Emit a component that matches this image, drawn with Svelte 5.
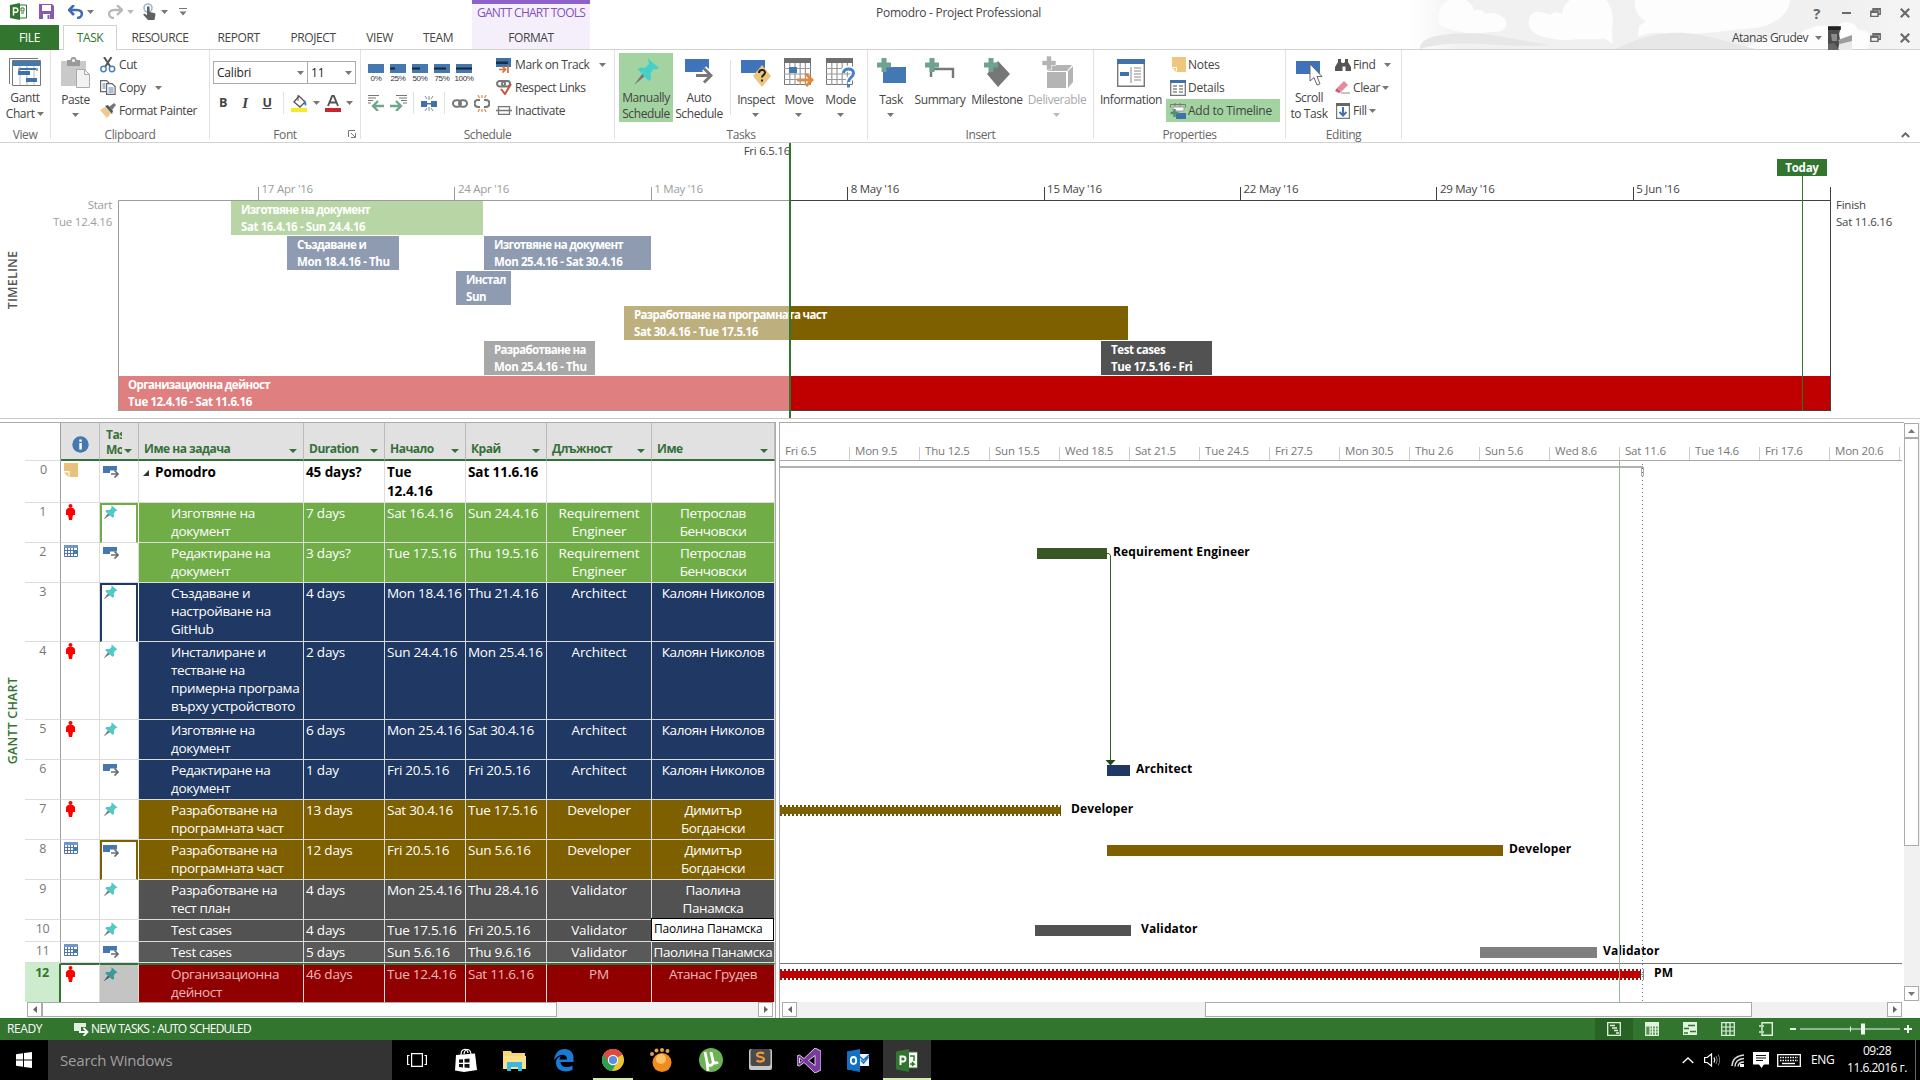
<script>
  const arrowDown = '<path d="M0 0h7L3.5 4z" fill="#777"/>';
  const bar = (w) => `<rect width="16" height="9" y="7" fill="#4478ae"/><rect x="0" y="10.5" width="${w}" height="2" fill="#17263a"/>`;
  const calendar = '<path d="M.5 .5h26v26H.5z" fill="#fff" stroke="#777"/><path d="M0 0h27v5H0z" fill="#6f6f6f"/><path d="M5.8 5v22M11 5v22M16.2 5v22M21.4 5v22M0 10.5h27M0 16h27M0 21.500h27" stroke="#9a9a9a" stroke-width="1.200"/>';
  const plus = '<path d="M4.500 0h5v4.500H14v5H9.500V14h-5V9.500H0v-5h4.500z" fill="#6fa292"/>';
  const restore = '<path d="M3 3V.8h7.200v5.400H8M.8 3.200H8v5.200H.8zM.8 4.200H8M3 1.500h7" fill="none" stroke="#6a6a6a" stroke-width="1.500"/>';
  const pinHead = 'M8.500 .3l6 5.200-2 .7-1.700 2.300.3 3.200-1.600 1L2.200 6.300l1.200-1.400 3.300.1 1.800-1.900z';

  // name: [width, height, markup]
  const icons = {
    down: [7, 4, arrowDown],
    downLight: [7, 4, '<path d="M0 0h7L3.500 4z" fill="#bbb"/>'],
    project: [17, 17, '<path d="M9 2h7.500v13H9z" fill="#fff" stroke="#31752f"/><path d="M11 5h3v3h-3zM11 10h3" stroke="#31752f" fill="none"/><path d="M0 2l10-2v17L0 15z" fill="#31752f"/><path d="M3.500 12.500V5h2.200a2 2 0 010 4.300H3.500" fill="none" stroke="#fff" stroke-width="1.500"/>'],
    save: [15, 15, '<path d="M0 0h13l2 2v13H0z" fill="#8558b4"/><path d="M3 1h9v6H3z" fill="#fff"/><path d="M4 10h7v5H4z" fill="#fff"/><path d="M8.500 11h2v4h-2z" fill="#8558b4"/>'],
    undo: [16, 14, '<path d="M6 0L1 5l5 5M2 5h7c7 0 6 8 0 8" fill="none" stroke="#3d6dae" stroke-width="2.600"/>'],
    redo: [16, 14, '<path d="M10 0l5 5-5 5M14 5H7C0 5 1 13 7 13" fill="none" stroke="#b8b8b8" stroke-width="2.400"/>'],
    touch: [14, 17, '<circle cx="6" cy="5" r="4" fill="none" stroke="#9bb6d6" stroke-width="1.600"/><path d="M5 4.500a1.300 1.300 0 012.600 0V9l4.500 1c1.300.3 1.500 1 1.300 2l-.9 5H6l-4.500-5c-.7-1 .7-1.800 1.600-1L5 12.300z" fill="#606060"/>'],
    customise: [8, 8, '<path d="M0 .5h8" stroke="#777"/><path d="M.5 3.500h7L4 7.500z" fill="#777"/>'],
    gantt: [32, 28, '<path d="M.5 26V.5H29" fill="none" stroke="#777"/><path d="M3.500 2.500h28v25h-28z" fill="#fff" stroke="#777"/><path d="M4 3h27v5H4z" fill="#4579ad"/><path d="M11 8v19M18 8v19M25 8v19" stroke="#bbb"/><path d="M11 10h16v2H11zM9 13h12v4H9zM17 20h11v4H17z" fill="#3f72ab"/><path d="M10 10v3M28 10v3" stroke="#444"/>'],
    paste: [29, 31, '<path d="M0 4h25v25H0z" fill="#c9c9c9"/><path d="M6 3h3.500a3 3 0 016 0H19v6H6z" fill="#9a9a9a"/><circle cx="12.500" cy="3.500" r="1.500" fill="#fff"/><path d="M15.500 12.500h8l5 5v13h-13z" fill="#f3f1f4" stroke="#aaa"/><path d="M23.500 12.500v5h5" fill="none" stroke="#aaa"/>'],
    cut: [16, 16, '<path d="M4 0l6.500 10M11.500 0L5 10" stroke="#555" stroke-width="2"/><circle cx="3.500" cy="12" r="2.700" fill="none" stroke="#4f80b7" stroke-width="1.500"/><circle cx="12" cy="12" r="2.700" fill="none" stroke="#4f80b7" stroke-width="1.500"/>'],
    copy: [16, 15, '<path d="M.6.6h6l2.500 2.500v8.500H.6z" fill="#fff" stroke="#666" stroke-width="1.200"/><path d="M2.500 4h3M2.500 6h3M2.500 8h3" stroke="#4f80b7"/><path d="M6.600 3.600h5.500l3 3v7.800H6.600z" fill="#fff" stroke="#666" stroke-width="1.200"/><path d="M8.500 8h5M8.500 10h5M8.500 12h5" stroke="#4f80b7"/>'],
    painter: [16, 15, '<path d="M0 7l5-3 6 6-4 5z" fill="#ecc98c"/><path d="M5 3l3-1 5 6-1 3z" fill="#555"/><path d="M9 4l5-4 2 2-4 5z" fill="#777"/>'],
    bucket: [17, 17, '<path d="M3 7l5-6 6 6-5 5z" fill="#fff" stroke="#555" stroke-width="1.300"/><path d="M7 0v6" stroke="#555"/><path d="M13 5c2 1 3 4 2 6l-2-2z" fill="#4579ad"/><path d="M0 13h16v4H0z" fill="#f4ea2a"/>'],
    fontColor: [16, 17, '<path d="M3 11L7.200.8h1.600L13 11M4.600 7.500h6.800" fill="none" stroke="#555" stroke-width="1.900"/><path d="M0 13h16v4H0z" fill="#c8262f"/>'],
    launcher: [8, 8, '<path d="M.5 7V.5H7M3 3l4 4M7.500 3v4.500H3" fill="none" stroke="#777"/>'],
    p0: [16, 16, bar(0)], p25: [16, 16, bar(5)], p50: [16, 16, bar(8)], p75: [16, 16, bar(12)], p100: [16, 16, bar(16)],
    outdent: [17, 16, '<path d="M0 .5h11M0 3h8M0 5.500h5M0 8h3" stroke="#777" stroke-width="1.200"/><path d="M16 11H6M10 6l-5 5 5 5" fill="none" stroke="#6fa58c" stroke-width="2.300"/>'],
    indent: [17, 16, '<path d="M6 .5h11M9 3h8M11 5.500h6M13 8h4" stroke="#777" stroke-width="1.200"/><path d="M0 11h10M6 6l5 5-5 5" fill="none" stroke="#6fa58c" stroke-width="2.300"/>'],
    split: [16, 15, '<path d="M0 5h6v6H0zM10 5h6v6h-6zM5 7h6v1.500H5z" fill="#3f72ab"/><path d="M8 0v4M8 11v4M4 0l2 3M12 0l-2 3M4 15l2-3M12 15l-2-3" stroke="#888"/>'],
    link: [16, 9, '<rect x="1" y="1.200" width="8" height="6.500" rx="3.200" fill="none" stroke="#777" stroke-width="2"/><rect x="7" y="1.200" width="8" height="6.500" rx="3.200" fill="none" stroke="#777" stroke-width="2"/>'],
    unlink: [16, 17, '<path d="M6 5H4a3.300 3.300 0 000 7h2M10 5h2a3.300 3.300 0 010 7h-2" fill="none" stroke="#777" stroke-width="2.200"/><path d="M8 0v3M4 0l1.500 3M12 0l-1.500 3M8 14v3M4 17l1.500-3M12 17l-1.500-3" stroke="#e08a45" stroke-width="1.200"/>'],
    track: [16, 16, '<path d="M0 1h15v9H0z" fill="#3f72ab"/><path d="M0 4.500h12v2.500H0z" fill="#1d2c40"/><path d="M3 12.500h6M6.500 9.500l3 3-3 3M12 8v8" fill="none" stroke="#d9702b" stroke-width="1.700"/>'],
    respect: [16, 15, '<rect x="1" y="1" width="8" height="5.500" rx="2.700" fill="none" stroke="#777" stroke-width="1.900"/><rect x="6" y="1" width="8" height="5.500" rx="2.700" fill="none" stroke="#777" stroke-width="1.900"/><path d="M5 9l4 5 6-10" fill="none" stroke="#c75336" stroke-width="2"/>'],
    inactive: [16, 9, '<path d="M2.500.7h11v7.600h-11zM0 4.500h16" fill="none" stroke="#777" stroke-width="1.300"/>'],
    pin: [27, 28, '<path d="M15 .5l11 9.500-2.500 1.500-3-.5-3 4.500.5 5.500-2.500 2L4.500 11l3-1.500 4.500.5 4-4z" fill="#45cfcb"/><path d="M9 16l2.500 2.500L1 27z" fill="#777"/>'],
    auto: [28, 26, '<path d="M0 0h24v13H0z" fill="#3f74ba"/><path d="M11 16h14M19 9.500l7 6.500-7 8" fill="none" stroke="#fff" stroke-width="6"/><path d="M11 16.500h14M19 9.500l7 7-7 7" fill="none" stroke="#777" stroke-width="3"/>'],
    inspect: [30, 28, '<path d="M0 1h24v13H0z" fill="#3f74ba"/><path d="M21 6l9 11-9 11-9-11z" fill="#ecc67c"/><path d="M18 14c0-4 6-4 6-.5 0 2.500-3 2.500-3 5M21 20.500v2" fill="none" stroke="#222" stroke-width="2"/>'],
    move: [30, 30, calendar + '<path d="M5 9h8v6H5z" fill="#4579ad"/><path d="M13 22h14M22 16l6 6-6 6" fill="none" stroke="#e28a3c" stroke-width="3"/>'],
    mode: [30, 30, calendar + '<path d="M17 15c0-6 11-6 11 0 0 5-5.500 4-5.500 9" fill="none" stroke="#fff" stroke-width="6"/><path d="M17.500 15c0-5.500 10-5.500 10 0 0 4.500-5 4.500-5 9M22.500 26v3.500" fill="none" stroke="#4a80c0" stroke-width="3"/>'],
    task: [29, 29, '<path d="M6 9h23v16H6z" fill="#4478b4"/>' + plus],
    summary: [30, 29, '<path d="M6 19v-8h22v9" fill="none" stroke="#777" stroke-width="2.400"/>' + plus],
    milestone: [26, 29, '<path d="M14 3l12 13-12 13L3 16z" fill="#777"/>' + plus],
    deliverable: [31, 33, '<path d="M5 15l6-6h19l-5 6zM5 16h19v16H5zM26 15l5-5v16l-5 6z" fill="#b4b4b4"/><path d="M4.500 0h5v4.500H14v5H9.500V14h-5V9.500H0v-5h4.500z" fill="#b4b4b4" stroke="#fff" stroke-width=".6"/>'],
    info: [28, 28, '<path d="M.7.7h26.600v26.600H.7z" fill="#fff" stroke="#777" stroke-width="1.400"/><path d="M0 0h28v5H0z" fill="#3f72ab"/><path d="M3 13h9v4H3z" fill="#3f72ab"/><path d="M14 8v16M17 9h7M17 12h7M17 15h7M17 18h7M17 21h7" stroke="#888"/>'],
    notes: [16, 15, '<path d="M2 0h14v15H6l-4-4z" fill="#efc77c"/><path d="M2 10h5v5z" fill="#fff"/><path d="M3 11h3v3z" fill="#efc77c"/>'],
    details: [16, 16, '<path d="M.7.7h14.600v14.600H.7z" fill="#fff" stroke="#777" stroke-width="1.300"/><path d="M0 0h16v3H0z" fill="#3f72ab"/><path d="M3 6h4M9 6h4M3 9h4M9 9h4M3 12h4M9 12h4" stroke="#888" stroke-width="1.500"/>'],
    timeline: [16, 16, '<path d="M.5 4.500V1.500h15v3M5 0v3M10 0v3" fill="none" stroke="#777"/><path d="M3 4h11v4H3z" fill="#fff" stroke="#999"/><path d="M6 10h10v6H6z" fill="#3f72ab"/><path d="M4.500 6v8M.5 10h8" stroke="#4e8d78" stroke-width="2.400"/>'],
    scroll: [27, 28, '<path d="M0 3h24v13H0z" fill="#3f72ba"/><path d="M14 6v17l4-3.500 3 7.500 3-1.200-3-7.300h5z" fill="#fff" stroke="#666"/>'],
    find: [16, 14, '<path d="M3 1h3v3l1 1h2l1-1V1h3v3l3 5v4h-5.500V8.500h-3V13H0V9l3-5z" fill="#555"/>'],
    clear: [16, 13, '<path d="M2 7l7-7 4 4-7 7z" fill="#e58a9b"/><path d="M2 7l4 4-2 1-4-2z" fill="#c55b70"/><path d="M6 12h9" stroke="#888"/>'],
    fill: [14, 16, '<path d="M.6.6h12.800v14.800H.6z" fill="#fff" stroke="#777" stroke-width="1.200"/><path d="M0 0h14v3H0z" fill="#666"/><path d="M7 4v8M3.500 9L7 12.500 10.500 9" fill="none" stroke="#3f72ab" stroke-width="2"/>'],
    min: [9, 2, '<path d="M0 0h9v2H0z" fill="#6a6a6a"/>'],
    restore: [11, 9, restore],
    close: [10, 10, '<path d="M.8.8l8.400 8.400M9.200.8L.8 9.200" stroke="#6a6a6a" stroke-width="2.200"/>'],
    collapse: [9, 6, '<path d="M.8 5L4.500 1.300 8.200 5" fill="none" stroke="#666" stroke-width="1.900"/>'],
    photo: [24, 24, '<path d="M0 0h24v24H0z" fill="#e9e9e9"/><path d="M0 0h13l-2 8 1 6-2 10H0z" fill="#4c4c4c"/><path d="M0 1h13v3H0z" fill="#222"/><path d="M3 8h6v7H4z" fill="#8b8b8b"/><path d="M13 0h11v9l-12 4z" fill="#fff"/><path d="M10 14l14-5v6l-12 3z" fill="#9d9d9d"/><path d="M0 18l6-1 5 7H0z" fill="#666"/>'],
    circleInfo: [17, 17, '<circle cx="8.500" cy="8.500" r="8.200" fill="#4478ae"/><path d="M7.300 7h2.500v6.500H7.300zM7.300 3.500h2.500v2.200H7.300z" fill="#fff"/>'],
    note: [15, 14, '<path d="M0 0h14v14H5.500V8H0z" fill="#e8c27d"/><path d="M0 9.500h4.500V14z" fill="#e8c27d"/>'],
    person: [9, 16, '<circle cx="4.500" cy="2" r="2" fill="#f00"/><path d="M2 4h5l2 2v5H7l-1 5H3l-1-5H0V6z" fill="#f00"/>'],
    cal: [14, 12, '<path d="M.5.5h13v11H.5z" fill="#fff" stroke="#5573a8"/><path d="M0 0h14v3H0z" fill="#6f96cf"/><path d="M3.500 3v8M6.500 3v8M9.500 3v8M1 5.500h12M1 8.500h12" stroke="#5573a8"/><path d="M10 6h3v2.500h-3z" fill="#1d8fc0"/>'],
    smallPin: [15, 15, `<path d="M5.200 8l2 2L.5 14.500z" fill="#777"/><path d="${pinHead}" fill="#4fcac6"/>`],
    darkPin: [15, 15, `<path d="M5.200 8l2 2L.5 14.500z" fill="#555"/><path d="${pinHead}" fill="#3a9a97"/>`],
    smallAuto: [16, 12, '<path d="M0 0h14v7H0z" fill="#4478ae"/><path d="M7 4.500h7v6H7z" fill="#fff"/><path d="M8 8h7M11.500 4.500L15 8l-3.500 3.500" fill="none" stroke="#6d6d6d" stroke-width="1.700"/>'],
    whiteAuto: [15, 13, '<path d="M0 0h12v4H7v4H0z" fill="#dff0df"/><path d="M5 9h8M9.500 5l4 4-4 4" fill="none" stroke="#fff" stroke-width="1.800"/>'],
    left: [4, 7, '<path d="M4 0v7L0 3.500z" fill="#666"/>'],
    right: [4, 7, '<path d="M0 0v7l4-3.500z" fill="#666"/>'],
    up: [7, 4, '<path d="M3.500 0L7 4H0z" fill="#777"/>'],
    caret: [8, 4, '<path d="M0 0h8L4 4z" fill="#35703a"/>'],
    expand: [6, 6, '<path d="M6 0v6H0z" fill="#333"/>'],
    vGantt: [14, 14, '<path d="M.7.7h12.600v12.600H.7zM3 3.500h5M5 6h5M7 8.500h4M9 11h3" fill="none" stroke="#dff3dd" stroke-width="1.300"/>'],
    vUsage: [14, 14, '<path d="M0 0h14v4H0zM.7 4v9.300h12.600V4M5 4v9M7.500 4v9M10.500 4v9M5 7h9M5 10h9" fill="#dff3dd" stroke="#dff3dd" stroke-width="1.200" fill-opacity=".2"/><path d="M0 0h14v4H0z" fill="#dff3dd"/>'],
    vTeam: [14, 14, '<path d="M0 0h14v13H0z" fill="#dff3dd"/><path d="M5 3.500h7M1 6.500h5M7 9.500h6M1 11h4" stroke="#31752f" stroke-width="1.700"/>'],
    vSheet: [14, 14, '<path d="M.7.7h12.600v12.600H.7zM5 1v12M9 1v12M1 5h12M1 9h12" fill="none" stroke="#dff3dd" stroke-width="1.200"/>'],
    vReport: [14, 14, '<path d="M3 3V.7h10.300v12.600H3V11M0 4h5M0 10h5M3 5v4" fill="none" stroke="#dff3dd" stroke-width="1.400"/>'],
    slider: [122, 14, '<path d="M0 6h6v2H0zM10 6.500h100v1H10zM60 4.500h1v5h-1zM71 1.500h4v11h-4zM114 6h8v2h-8zM117 3h2v8h-2z" fill="#eefaee"/>'],
    windows: [16, 16, '<path d="M0 2.200l7-1v6.300H0zM8 1l8-1v7.500H8zM0 8.500h7v6.300l-7-1zM8 8.500h8V16l-8-1z" fill="#fff"/>'],
    taskview: [20, 14, '<path d="M4.600.6h10.800v12.800H4.600zM2.500 2.500H.6v9h1.900M17.500 2.500h1.900v9h-1.900" fill="none" stroke="#fff" stroke-width="1.200"/>'],
    store: [22, 24, '<path d="M1 7l19-1.500L22 22l-13 2-9-1.500z" fill="#fff"/><path d="M6 7c0-7 6-7 7-2M9 6c1-6 6-6 7 0" fill="none" stroke="#fff" stroke-width="1.200"/><path d="M4 11.500l4-.3v3.500H4zM9.500 11l5-.4v4h-5zM4 16h4v3.500l-4-.4zM9.500 16h5v4l-5-.5z" fill="#111"/>'],
    folder: [23, 21, '<path d="M0 1h8l1 2h13v16H0z" fill="#f6d676"/><path d="M0 6h23v13H0z" fill="#fbe08b"/><path d="M4 21v-9h15v9h-4v-4H8v4z" fill="#3cb7e4"/>'],
    edge: [21, 23, '<path d="M1 11C2 3 7 0 11.500 0 18 0 21 5 20.500 10v3H7.500c.5 6 8 6 12 3.500v4.300C14 24 3 23 3 14c0-4 2-6 5-7-1 1-1.500 2.200-1.500 3.500H14C14 4 6 4.500 1 11z" fill="#1a7bd7"/>'],
    chrome: [22, 22, '<circle cx="11" cy="11" r="11" fill="#e9c536"/><path d="M11 11L1.500 5.500A11 11 0 0120.500 5.500z" fill="#dd4b3e"/><path d="M11 11L1.500 5.500A11 11 0 0010 22l5-9z" fill="#2f9e55"/><path d="M11 5.500h9.500a11 11 0 00-19 0L6 12z" fill="#dd4b3e"/><circle cx="11" cy="11" r="5.200" fill="#fff"/><circle cx="11" cy="11" r="4.100" fill="#5b8de0"/>'],
    gom: [23, 24, '<circle cx="12" cy="14.500" r="9.500" fill="#f08c1d"/><circle cx="11" cy="11" r="5" fill="#fbc267"/><circle cx="2" cy="6" r="2" fill="#d9a05a"/><circle cx="6.500" cy="2.500" r="2" fill="#e8a73c"/><circle cx="12" cy="2" r="2" fill="#e8a73c"/><circle cx="17.500" cy="3" r="2" fill="#d9a05a"/>'],
    torrent: [24, 24, '<circle cx="12" cy="12" r="12" fill="#6db253"/><path d="M6 4l2 10c1 5 7 4 6-1L12 4M14 13c1 3 4 2 5 1M8 14l1 9" fill="none" stroke="#fff" stroke-width="2.800"/>'],
    sublime: [23, 22, '<rect width="23" height="21" rx="2" fill="#c8c8c8"/><rect x="1.500" y="0" width="20" height="17" rx="2" fill="#4a4a4a"/><path d="M15 4.500c-3-1.500-7-1-7 1.500s7 1.500 7 4-4 3.500-7.500 1.500" fill="none" stroke="#f0993c" stroke-width="2.200"/>'],
    studio: [24, 25, '<path d="M18 0l6 3v19l-6 3L7 14.500 2.500 18 0 17V8l2.500-1L7 10.500zM18 7.500L11.500 12.500 18 17.500zM2.500 10v5L5 12.500z" fill="#7b3aa0" fill-rule="evenodd" stroke="#fff" stroke-width=".8"/>'],
    outlook: [22, 23, '<path d="M11 5h11v12H11z" fill="#eaf3fb"/><path d="M11 6l5.500 5L22 6M14 11l2.500 3 5-6" fill="none" stroke="#1271c4" stroke-width="1.500"/><path d="M0 2.500L13 0v23L0 20.500z" fill="#1271c4"/><ellipse cx="6.500" cy="11.500" rx="2.700" ry="3.500" fill="none" stroke="#fff" stroke-width="1.800"/>'],
    msproject: [22, 23, '<path d="M11 3h10.500v16H11z" fill="#fff" stroke="#31752f"/><path d="M14 7h4v5M14 15h4l-2-2M16 17l2-2" fill="none" stroke="#31752f" stroke-width="1.500"/><path d="M0 2.500L13 0v23L0 20.500z" fill="#31752f"/><path d="M4.500 16V7.500H7a2.500 2.500 0 010 5H4.500" fill="none" stroke="#fff" stroke-width="1.900"/>'],
    chevron: [12, 7, '<path d="M.7 6L6 1l5.300 5" fill="none" stroke="#fff" stroke-width="1.400"/>'],
    volume: [16, 14, '<path d="M.6 4.500h2.600L7.500 1v12L3.200 9.500H.6z" fill="none" stroke="#fff" stroke-width="1.200"/><path d="M10 4.500q1.500 2.500 0 5" fill="none" stroke="#fff" stroke-width="1.200"/><path d="M12 3q2.500 4 0 8M14 1.500q3.500 5.500 0 11" fill="none" stroke="#777"/>'],
    wifi: [14, 13, '<path d="M1 12Q1.500 2 13 1M4 12.500Q4.500 5 13 4.500M7 12.500Q7.500 8 13 8" fill="none" stroke="#ddd" stroke-width="1.500"/><path d="M9 10h4v3H9z" fill="#fff"/>'],
    message: [16, 16, '<path d="M0 0h16v12.500h-5L8.500 16 6 12.500H0z" fill="#fff"/><path d="M3 3.500h10M3 6h10M3 8.500h7" stroke="#111" stroke-width="1.200"/>'],
    keyboard: [24, 13, '<path d="M.7.7h22.600v11.600H.7z" fill="none" stroke="#fff" stroke-width="1.300"/><path d="M3 3.500h18M3 6.500h18" stroke="#fff" stroke-width="1.600" stroke-dasharray="1.500 1"/><path d="M5 9.500h13" stroke="#fff" stroke-width="1.400"/>']
  };

  const tabs = [
    ['RESOURCE', 86], ['REPORT', 71], ['PROJECT', 78], ['VIEW', 55], ['TEAM', 62]
  ];

  const timelineBars = [
    { x: 231, w: 252, row: 0, fill: '#b8d6a5', a: 'Изготвяне на документ', b: 'Sat 16.4.16 - Sun 24.4.16' },
    { x: 287, w: 112, row: 1, fill: '#8f9bb0', a: 'Създаване и', b: 'Mon 18.4.16 - Thu' },
    { x: 484, w: 167, row: 1, fill: '#8f9bb0', a: 'Изготвяне на документ', b: 'Mon 25.4.16 - Sat 30.4.16' },
    { x: 456, w: 55, row: 2, fill: '#8f9bb0', a: 'Инстал', b: 'Sun' },
    { x: 624, w: 504, row: 3, fill: '#7f6000', faded: '#beaf7f', a: 'Разработване на програмната част', b: 'Sat 30.4.16 - Tue 17.5.16' },
    { x: 484, w: 111, row: 4, fill: '#a8a8a8', a: 'Разработване на', b: 'Mon 25.4.16 - Thu' },
    { x: 1101, w: 111, row: 4, fill: '#525252', a: 'Test cases', b: 'Tue 17.5.16 - Fri' },
    { x: 118, w: 1712, row: 5, fill: '#c00000', faded: '#df7f7f', a: 'Организационна дейност', b: 'Tue 12.4.16 - Sat 11.6.16' }
  ];
  const weeks = ["17 Apr '16", "24 Apr '16", "1 May '16", "8 May '16", "15 May '16", "22 May '16", "29 May '16", "5 Jun '16"];

  const heads = ['Име на задача', 'Duration', 'Начало', 'Край', 'Длъжност', 'Име'];
  const G = '#70ad47', N = '#203864', O = '#7f6000', D = '#525252';
  const rows = [
    { h: 40, bg: G, ind: 'person', mode: 'smallPin', box: true, c: ['Изготвяне на\nдокумент', '7 days', 'Sat 16.4.16', 'Sun 24.4.16', 'Requirement\nEngineer', 'Петрослав\nБенчовски'] },
    { h: 40, bg: G, ind: 'cal', mode: 'smallAuto', c: ['Редактиране на\nдокумент', '3 days?', 'Tue 17.5.16', 'Thu 19.5.16', 'Requirement\nEngineer', 'Петрослав\nБенчовски'] },
    { h: 59, bg: N, mode: 'smallPin', box: true, c: ['Създаване и\nнастройване на\nGitHub', '4 days', 'Mon 18.4.16', 'Thu 21.4.16', 'Architect', 'Калоян Николов'] },
    { h: 78, bg: N, ind: 'person', mode: 'smallPin', c: ['Инсталиране и\nтестване на\nпримерна програма\nвърху устройството', '2 days', 'Sun 24.4.16', 'Mon 25.4.16', 'Architect', 'Калоян Николов'] },
    { h: 40, bg: N, ind: 'person', mode: 'smallPin', c: ['Изготвяне на\nдокумент', '6 days', 'Mon 25.4.16', 'Sat 30.4.16', 'Architect', 'Калоян Николов'] },
    { h: 40, bg: N, mode: 'smallAuto', c: ['Редактиране на\nдокумент', '1 day', 'Fri 20.5.16', 'Fri 20.5.16', 'Architect', 'Калоян Николов'] },
    { h: 40, bg: O, ind: 'person', mode: 'smallPin', c: ['Разработване на\nпрограмната част', '13 days', 'Sat 30.4.16', 'Tue 17.5.16', 'Developer', 'Димитър\nБогдански'] },
    { h: 40, bg: O, ind: 'cal', mode: 'smallAuto', box: true, c: ['Разработване на\nпрограмната част', '12 days', 'Fri 20.5.16', 'Sun 5.6.16', 'Developer', 'Димитър\nБогдански'] },
    { h: 40, bg: D, mode: 'smallPin', c: ['Разработване на\nтест план', '4 days', 'Mon 25.4.16', 'Thu 28.4.16', 'Validator', 'Паолина\nПанамска'] },
    { h: 22, bg: D, mode: 'smallPin', edit: true, c: ['Test cases', '4 days', 'Tue 17.5.16', 'Fri 20.5.16', 'Validator', 'Паолина Панамска'] },
    { h: 21, bg: '#595959', ind: 'cal', mode: 'smallAuto', c: ['Test cases', '5 days', 'Sun 5.6.16', 'Thu 9.6.16', 'Validator', 'Паолина Панамска'] },
    { h: 39, bg: '#910000', ind: 'person', mode: 'darkPin', sel: true, c: ['Организационна\nдейност', '46 days', 'Tue 12.4.16', 'Sat 11.6.16', 'PM', 'Атанас Грудев'] }
  ];

  const days = ['Fri 6.5', 'Mon 9.5', 'Thu 12.5', 'Sun 15.5', 'Wed 18.5', 'Sat 21.5', 'Tue 24.5', 'Fri 27.5', 'Mon 30.5', 'Thu 2.6', 'Sun 5.6', 'Wed 8.6', 'Sat 11.6', 'Tue 14.6', 'Fri 17.6', 'Mon 20.6'];
  const ganttBars = [
    { x: 1037, w: 70, y: 548, fill: '#385723', t: 'Requirement Engineer', tx: 1113 },
    { x: 1107, w: 23, y: 765, fill: '#203864', t: 'Architect', tx: 1136 },
    { x: 780, w: 281, y: 805, fill: '#7f6000', t: 'Developer', tx: 1071, fringe: '#6b5200' },
    { x: 1107, w: 396, y: 845, fill: '#7f6000', t: 'Developer', tx: 1509 },
    { x: 1035, w: 96, y: 925, fill: '#525252', t: 'Validator', tx: 1141 },
    { x: 1480, w: 117, y: 947, fill: '#7f7f7f', t: 'Validator', tx: 1603 },
    { x: 780, w: 861, y: 969, fill: '#c00000', t: 'PM', tx: 1654, fringe: '#9c1010' }
  ];
  const taskbar = ['taskview', 'store', 'folder', 'edge', 'chrome', 'gom', 'torrent', 'sublime', 'studio', 'outlook', 'msproject'];
</script>

{#snippet ic(name)}
  <svg class="ic" width={icons[name][0]} height={icons[name][1]} viewBox="0 0 {icons[name][0]} {icons[name][1]}">{@html icons[name][2]}</svg>
{/snippet}

{#snippet big(icon, a, b, cls)}
  <div class="big {cls}">
    <div class="pic">{@render ic(icon)}</div>
    <span>{a}</span>
    {#if b === 'down' || b === 'downLight'}<span class="arr">{@render ic(b)}</span>
    {:else if b}<span>{b}{#if b === 'Chart'}&nbsp;{@render ic('down')}{/if}</span>{/if}
  </div>
{/snippet}

{#snippet small(icon, text, cls)}
  <div class="small {cls}"><i>{@render ic(icon)}</i><span>{text}</span>
    {#if cls.includes('dd')}<b>{@render ic('down')}</b>{/if}
  </div>
{/snippet}

<div class="app">
  <header>
    <svg class="clouds" width="510" height="49" viewBox="0 0 510 49">
      <defs>
        <linearGradient id="fade"><stop offset="0" stop-color="#fff" /><stop offset=".1" stop-color="#f1f1f1" /><stop offset=".85" stop-color="#f0f0f0" /><stop offset="1" stop-color="#f5f5f5" /></linearGradient>
      </defs>
      <path d="M0 0H510V49H0z" fill="url(#fade)" />
      <g fill="#fdfdfd">
        <path d="M30 25c-5-18 6-27 16-27s17 6 18 13c6-3 10 0 11 3 11-4 24 4 21 12-1 5-8 6-16 6-14 2-30 3-50-7z" />
        <path d="M119 19c2-10 15-7 21-4 4-4 9-3 12-1C154 2 160-2 170-3h22c10 6 12 21 10 33l1 14-9-6c-10 3-24 0-35 2-20 0-44-5-40-21z" />
        <path d="M225 0h155c-1 17-20 28-45 29-30 3-61 7-80 4-12-1-20 1-27 4l1-11 7-5c-10-5-12-14-11-21z" />
        <path d="M330 49c20-8 45-18 60-15 10-8 24-11 36-6 4-8 20-8 22 2 14 0 16 10 9 19z" />
      </g>
      <path d="M40 34c40-3 50 4 100 11-50 4-90-8-130 4 0-10 12-13 30-15zM226 40c50-16 72-2 120 9H205z" fill="#e7e7e7" />
    </svg>
    <div class="title">
      <div class="qat">
        {@render ic('project')}{@render ic('save')}{@render ic('undo')}{@render ic('down')}{@render ic('redo')}{@render ic('downLight')}{@render ic('touch')}{@render ic('down')}{@render ic('customise')}
      </div>
      <div class="name">Pomodro - Project Professional</div>
      <div class="win"><span class="q">?</span><span>{@render ic('min')}</span><span>{@render ic('restore')}</span><span>{@render ic('close')}</span></div>
    </div>
    <div class="tabs">
      <div class="file">FILE</div>
      <div class="active">TASK</div>
      {#each tabs as [t, w]}<div style="width:{w}px">{t}</div>{/each}
      <div class="user"><span>Atanas Grudev</span><i>{@render ic('down')}</i>{@render ic('photo')}<em>{@render ic('restore')}</em><em>{@render ic('close')}</em></div>
    </div>
    <div class="context"><span>GANTT CHART TOOLS</span><span>FORMAT</span></div>
  </header>

  <section class="ribbon">
    <div class="group g-view"><div class="body">{@render big('gantt', 'Gantt', 'Chart', 'w50')}</div><div class="label">View</div></div>
    <div class="group g-clip">
      <div class="body">
        {@render big('paste', 'Paste', 'down', 'w49')}
        <div class="col">{@render small('cut', 'Cut', '')}{@render small('copy', 'Copy', 'dd far')}{@render small('painter', 'Format Painter', '')}</div>
      </div>
      <div class="label">Clipboard</div>
    </div>
    <div class="group g-font">
      <div class="body fontbody">
        <div class="combos"><div class="combo wide">Calibri<i>{@render ic('down')}</i></div><div class="combo">11<i>{@render ic('down')}</i></div></div>
        <div class="fmt"><b>B</b><b class="it">I</b><b class="un">U</b><s></s>{@render ic('bucket')}<i>{@render ic('down')}</i>{@render ic('fontColor')}<i>{@render ic('down')}</i></div>
      </div>
      <div class="label">Font<em>{@render ic('launcher')}</em></div>
    </div>
    <div class="group g-sched">
      <div class="body">
        <div class="sched">
          <div class="pcts">{#each ['0', '25', '50', '75', '100'] as p}<div>{@render ic('p' + p)}<span>{p}%</span></div>{/each}</div>
          <div class="links"><i>{@render ic('outdent')}</i><i>{@render ic('indent')}</i><s></s><i>{@render ic('split')}</i><s></s><i>{@render ic('link')}</i><i>{@render ic('unlink')}</i></div>
        </div>
        <div class="col">{@render small('track', 'Mark on Track', 'dd far')}{@render small('respect', 'Respect Links', '')}{@render small('inactive', 'Inactivate', '')}</div>
      </div>
      <div class="label">Schedule</div>
    </div>
    <div class="group g-tasks">
      <div class="body">
        {@render big('pin', 'Manually', 'Schedule', 'w54 on')}{@render big('auto', 'Auto', 'Schedule', 'w52')}<s class="rule"></s>{@render big('inspect', 'Inspect', 'down', 'w42')}{@render big('move', 'Move', 'down', 'w44')}{@render big('mode', 'Mode', 'down', 'w39')}
      </div>
      <div class="label">Tasks</div>
    </div>
    <div class="group g-insert">
      <div class="body">
        {@render big('task', 'Task', 'down', 'w44')}{@render big('summary', 'Summary', '', 'w54')}{@render big('milestone', 'Milestone', '', 'w60')}{@render big('deliverable', 'Deliverable', 'downLight', 'w60 dim')}
      </div>
      <div class="label">Insert</div>
    </div>
    <div class="group g-props">
      <div class="body">
        {@render big('info', 'Information', '', 'w64')}
        <div class="col tight">{@render small('notes', 'Notes', '')}{@render small('details', 'Details', '')}{@render small('timeline', 'Add to Timeline', 'on')}</div>
      </div>
      <div class="label">Properties</div>
    </div>
    <div class="group g-edit">
      <div class="body">
        {@render big('scroll', 'Scroll', 'to Task', 'w46')}
        <div class="col edit">{@render small('find', 'Find', 'dd far')}{@render small('clear', 'Clear', 'dd')}{@render small('fill', 'Fill', 'dd')}</div>
      </div>
      <div class="label">Editing</div>
    </div>
    <div class="collapse">{@render ic('collapse')}</div>
  </section>

  <section class="timeline">
    <svg width="1920" height="275" viewBox="0 143 1920 275">
      <text class="side" transform="translate(17 280) rotate(-90)" text-anchor="middle">TIMELINE</text>
      <g class="past">
        <text x="112" y="208.500" text-anchor="end">Start</text>
        <text x="112" y="225.500" text-anchor="end">Tue 12.4.16</text>
      </g>
      <text x="1836" y="208.500">Finish</text>
      <text x="1836" y="225.500">Sat 11.6.16</text>
      {#each timelineBars as b}
        <rect x={b.x} y={201 + b.row * 35} width={b.w} height="34" fill={b.fill} />
        {#if b.faded}<rect x={b.x} y={201 + b.row * 35} width={790 - b.x} height="34" fill={b.faded} />{/if}
        <g class="bt"><text class:cyr={b.a !== 'Test cases'} x={b.x + 10} y={214 + b.row * 35}>{b.a}</text><text x={b.x + 10} y={231 + b.row * 35}>{b.b}</text></g>
      {/each}
      <path d="M118.500 411V200.500H790M118 410.500H790" fill="none" stroke="#9c9c9c" />
      <path d="M790 200.500H1830M1830.500 187V411M790 410.500H1830" fill="none" stroke="#404040" />
      {#each weeks as w, i}
        <path d="M{Math.round(258 + i * 196.400) + 0.5} 187v13" stroke={i < 3 ? '#9c9c9c' : '#404040'} />
        <text class:old={i < 3} x={261.500 + i * 196.400} y="192.500">{w}</text>
      {/each}
      <text x="790" y="154.500" text-anchor="end">Fri 6.5.16</text>
      <path d="M790 143V418" stroke="#31752f" stroke-width="2" />
      <path d="M1802.500 176V411" stroke="#31752f" />
      <rect x="1777" y="159" width="50" height="17" fill="#31752f" />
      <text class="today" x="1802" y="171.500" text-anchor="middle">Today</text>
    </svg>
  </section>

  <section class="main">
    <div class="strip"><span>GANTT CHART</span></div>
    <div class="sheet">
      <div class="row head">
        <div class="idx"></div>
        <div class="ci">{@render ic('circleInfo')}</div>
        <div class="hm"><span>Tas<br />Mo</span>{@render ic('caret')}</div>
        {#each heads as h}<div class="hc"><span>{h}</span>{@render ic('caret')}</div>{/each}
      </div>
      <div class="row zero">
        <div class="idx">0</div><div class="ind">{@render ic('note')}</div><div class="mode">{@render ic('smallAuto')}</div>
        <div class="sum">{@render ic('expand')}<span>Pomodro</span></div><div>45 days?</div><div>Tue<br />12.4.16</div><div>Sat 11.6.16</div><div></div><div></div>
      </div>
      {#each rows as r, i}
        <div class="row task" class:sel={r.sel} style="height:{r.h}px;--bg:{r.bg}">
          <div class="idx">{i + 1}</div>
          <div class="ind" class:per={r.ind === 'person'}>{#if r.ind}{@render ic(r.ind)}{/if}</div>
          <div class="mode" class:box={r.box} class:au={r.mode === 'smallAuto'}>{@render ic(r.mode)}</div>
          {#each r.c as c, k}
            <div class="c c{k}" class:edit={r.edit && k === 5}>{c}</div>
          {/each}
        </div>
      {/each}
      <div class="hs"><i>{@render ic('left')}</i><u class="t1"></u><i class="end">{@render ic('right')}</i></div>
    </div>
    <div class="chart">
      <div class="plot">
        <svg width="1122" height="579" viewBox="780 423 1122 579">
          <path d="M780 460.500H1904" stroke="#a8a8a8" />
          {#each days as d, i}
            {#if i}<path d="M{779.500 + i * 70} 447v13" stroke="#ccc" />{/if}
            <text class="day" x={785 + i * 70} y="455">{d}</text>
          {/each}
          <path d="M1899.500 447v13" stroke="#ccc" />
          <path d="M780 467H1643" stroke="#b1b1b1" stroke-width="2" />
          <path d="M1641.500 467v9h2v-9" fill="none" stroke="#aaa" />
          <path d="M780 963.500H1903" stroke="#777" />
          {#each ganttBars as b}
            {#if b.fringe}
              <path d="M{b.x} {b.y + 5.500}h{b.w}" stroke={b.fringe} stroke-width="11" stroke-dasharray="2 2" />
              <rect x={b.x} y={b.y + 2} width={b.w} height="7" fill={b.fill} />
              <rect x={b.x + b.w - 1} y={b.y} width="1" height="11" fill={b.fringe} />
            {:else}
              <rect x={b.x} y={b.y} width={b.w} height="11" fill={b.fill} />
            {/if}
            <text class="res" x={b.tx} y={b.y + 8}>{b.t}</text>
          {/each}
          <path d="M1107 553.500h2l1.500 2V764" fill="none" stroke="#385723" />
          <path d="M1105.500 760h10l-5 5.500z" fill="#1c4a18" />
          <path d="M1643.500 969v11M1641 974.500h3" stroke="#6d9a9a" />
          <path d="M1619.500 461V1002" stroke="#97b797" />
          <path d="M1642.500 464V1002" stroke="#777" stroke-dasharray="1 3" />
        </svg>
        <div class="hs"><i>{@render ic('left')}</i><u class="t2"></u><i class="end">{@render ic('right')}</i></div>
      </div>
      <div class="vsb"><i>{@render ic('up')}</i><u></u><i class="bot">{@render ic('down')}</i></div>
    </div>
  </section>

  <footer class="status">
    <span class="ready">READY</span>{@render ic('whiteAuto')}<span class="nt">NEW TASKS : AUTO SCHEDULED</span>
    <div class="views"><i class="cur">{@render ic('vGantt')}</i><i>{@render ic('vUsage')}</i><i>{@render ic('vTeam')}</i><i>{@render ic('vSheet')}</i><i>{@render ic('vReport')}</i></div>
    {@render ic('slider')}
  </footer>

  <footer class="taskbar">
    <div class="start">{@render ic('windows')}</div>
    <div class="search">Search Windows</div>
    <div class="apps">{#each taskbar as t}<i class={t}>{@render ic(t)}</i>{/each}</div>
    <div class="tray">
      {@render ic('chevron')}{@render ic('volume')}{@render ic('wifi')}{@render ic('message')}{@render ic('keyboard')}<span>ENG</span>
      <div class="clock">09:28<br />11.6.2016 г.</div><s></s>
    </div>
  </footer>
</div>

<style>
  :global(body) { margin: 0; overflow: hidden; background: #fff; }
  .app { width: 1920px; height: 1080px; display: flex; flex-direction: column; font: 12px/16px "Open Sans", "Noto Sans", sans-serif; letter-spacing: -0.4px; color: #444; overflow: hidden; }
  .app * { box-sizing: border-box; }
  i, em, s, u { font-style: normal; text-decoration: none; display: flex; }
  .ic { display: block; flex: none; }

  header { position: relative; height: 50px; border-bottom: 1px solid #d2d2d2; flex: none; }
  .clouds { position: absolute; right: 0; top: 0; }
  .title { position: relative; display: flex; height: 25px; align-items: center; }
  .qat { width: 876px; display: flex; align-items: center; padding: 0 0 2px 10px; }
  .qat .ic:nth-child(2) { margin-left: 12px; }
  .qat .ic:nth-child(3) { margin-left: 14px; }
  .qat .ic:nth-child(4) { margin-left: 3px; }
  .qat .ic:nth-child(5) { margin-left: 13px; }
  .qat .ic:nth-child(6) { margin-left: 4px; }
  .qat .ic:nth-child(7) { margin-left: 8px; }
  .qat .ic:nth-child(8) { margin-left: 5px; }
  .qat .ic:nth-child(9) { margin-left: 11px; }
  .name { flex: 1; white-space: nowrap; letter-spacing: -.28px; }
  .win { display: flex; align-items: center; }
  .win span { width: 29.500px; display: flex; justify-content: center; }
  .win .q { font-weight: 700; font-size: 15px; color: #666; }
  .tabs { position: relative; display: flex; height: 25px; line-height: 25px; }
  .tabs > div { text-align: center; flex: none; }
  .tabs .file { width: 59px; background: #31752f; color: #fff; margin-right: 4px; }
  .tabs .active { width: 54px; height: 25px; color: #31752f; background: #fff; border: 1px solid #d2d2d2; border-bottom: 0; line-height: 24px; }
  .tabs .user { display: flex; align-items: center; margin-left: auto; }
  .user span { width: 82px; white-space: nowrap; letter-spacing: -.5px; text-align: left; }
  .user i { width: 14px; padding-left: 1px; }
  .user em { width: 29.500px; justify-content: center; }
  .user em:nth-of-type(1) { margin-left: 9px; }
  .context { position: absolute; left: 472px; top: 0; width: 118px; height: 49px; background: #f5effc; border-top: 4px solid #8e62cd; display: flex; flex-direction: column; align-items: center; }
  .context span { height: 20px; line-height: 18px; white-space: nowrap; }
  .context span:first-child { color: #8650bb; letter-spacing: -.75px; }
  .context span:last-child { line-height: 27px; }

  .ribbon { display: flex; height: 93px; border-bottom: 1px solid #d2d2d2; flex: none; }
  .group { height: 89px; border-right: 1px solid #e1e1e1; flex: none; }
  .body { display: flex; height: 76px; padding-top: 3px; }
  .label { text-align: center; line-height: 17px; color: #666; position: relative; }
  .label em { position: absolute; right: 4px; top: 4px; }
  .g-view { width: 51px; } .g-clip { width: 159px; } .g-font { width: 151px; } .g-sched { width: 254px; }
  .g-tasks { width: 253px; } .g-insert { width: 226px; } .g-props { width: 192px; } .g-edit { width: 116px; }
  .g-tasks .body { padding-left: 4px; } .g-insert .body { padding-left: 1px; } .g-props .body { padding-left: 5px; }
  .big { display: flex; flex-direction: column; align-items: center; height: 69px; flex: none; white-space: nowrap; }
  .big span { display: flex; align-items: center; height: 16px; }
  .big .pic { height: 39px; display: flex; align-items: center; }
  .big .arr { padding-right: 1px; height: 14px; }
  .on { background: #a3d3a0; }
  .dim { color: #aaa; }
  .w39 { width: 39px; } .w42 { width: 42px; } .w44 { width: 44px; } .w46 { width: 46px; } .w49 { width: 49px; } .w50 { width: 50px; }
  .w52 { width: 52px; } .w54 { width: 54px; } .w60 { width: 60px; } .w64 { width: 64px; }
  .rule { width: 1px; height: 55px; margin: 7px 4px 0 5px; background: #e1e1e1; }
  .col { display: flex; flex-direction: column; }
  .small { height: 23px; display: flex; align-items: center; white-space: nowrap; }
  .small i { width: 16px; justify-content: center; margin-right: 3px; }
  .small b { margin-left: 2px; }
  .small.far b { margin-left: 9px; }
  .tight { margin-left: 3px; }
  .tight .small { padding-left: 4px; width: 114px; letter-spacing: -.25px; }
  .tight .small i, .edit .small i { margin-right: 2px; }
  .edit.col { padding-left: 3px; }
  .fontbody { flex-direction: column; padding: 11px 0 0 3px; }
  .combos { display: flex; height: 23px; }
  .combo { width: 49px; border: 1px solid #ababab; display: flex; align-items: center; justify-content: space-between; padding: 0 2px 0 3px; color: #222; letter-spacing: -.2px; }
  .combo.wide { width: 95px; margin-right: -1px; }
  .combo i { padding-right: 1px; }
  .fmt { display: flex; align-items: center; height: 24px; margin: 7px 0 0 -1px; }
  .fmt b { width: 22px; text-align: center; font-size: 12.500px; color: #444; }
  .fmt .it { font-family: "Liberation Serif", serif; font-style: italic; font-size: 15px; }
  .fmt .un { text-decoration: underline; }
  .fmt s { width: 1px; height: 22px; background: #e1e1e1; margin: 0 7px 0 5px; }
  .fmt i { width: 17px; justify-content: center; }
  .sched { padding-left: 7px; width: 135px; }
  .pcts { display: flex; gap: 6px; padding-top: 4px; }
  .pcts div { width: 16px; height: 28px; display: flex; flex-direction: column; align-items: center; }
  .pcts span { font: 8px/9px "Liberation Sans", sans-serif; letter-spacing: -.3px; color: #333; padding-top: 1px; }
  .links { display: flex; align-items: center; height: 24px; margin-top: 6px; }
  .links i { width: 16px; margin-right: 6px; }
  .links s { width: 1px; height: 22px; background: #e1e1e1; margin: 0 7px 0 1px; }
  .collapse { margin: 82px 10px 0 auto; }

  .timeline { height: 276px; border-bottom: 1px solid #c8c8c8; flex: none; }
  svg { display: block; }
  .timeline text { fill: #444; font-size: 11.500px; letter-spacing: -.25px; }
  .timeline .past text, .timeline text.old { fill: #9c9c9c; }
  .timeline .bt text { fill: #fff; font-weight: 700; font-size: 11.500px; letter-spacing: -.4px; }
  .timeline .bt text.cyr { letter-spacing: -.65px; }
  .timeline text.side { font-size: 12.500px; letter-spacing: .2px; fill: #555; font-weight: 600; }
  .timeline .today { fill: #fff; font-weight: 700; }

  .main { display: flex; height: 599px; padding-top: 3px; flex: none; }
  .strip { width: 25px; display: flex; align-items: center; justify-content: center; border-top: 1px solid #ababab; }
  .strip span { writing-mode: vertical-rl; transform: rotate(180deg); color: #31752f; font-size: 12.500px; letter-spacing: .2px; font-weight: 600; }
  .sheet { width: 751px; border-top: 1px solid #ababab; border-right: 1px solid #ababab; display: flex; flex-direction: column; }
  .row { display: grid; grid-template-columns: 36px 39px 39px 165px 81px 81px 81px 105px 123px; flex: none; }
  .row > div { border-right: 1px solid #dcdcdc; border-bottom: 1px solid #dcdcdc; overflow: hidden; }
  .row > .idx { border-right: 1px solid #a0a0a0; text-align: center; color: #777; padding-top: 1px; line-height: 16px; font-size: 12.500px; }
  .head { height: 38px; color: #35703a; font-weight: 700; font-size: 12px; letter-spacing: -.5px; }
  .head > div { background: #e1e1e1; border-bottom: 2px solid #35703a; border-right-color: #bbb; }
  .head > .idx { background: #fff; border-bottom: 1px solid #dcdcdc; }
  .head .ci { display: flex; align-items: center; justify-content: center; padding-top: 6px; }
  .head .hm { display: flex; align-items: flex-end; padding: 0 0 1px 6px; line-height: 15px; }
  .hm span { width: 16px; overflow: hidden; }
  .hm .ic, .hc .ic { margin: 0 6px 5px auto; }
  .head .hc { display: flex; align-items: flex-end; padding: 0 0 1px 5px; white-space: nowrap; }
  .hc span, .hm span { padding-bottom: 1px; }
  .zero { height: 42px; font: 700 13.500px/19px "Open Sans", "Noto Sans", sans-serif; color: #000; letter-spacing: -.1px; }
  .zero > div { padding: 2px 0 0 2px; }
  .zero > .idx { font-weight: 400; }
  .zero .sum { display: flex; padding-left: 4px; }
  .sum .ic { margin: 7px 6px 0 0; }
  .ind { padding: 2px 0 0 3px !important; }
  .ind.per { padding: 1px 0 0 5px !important; }
  .mode { padding: 2px 0 0 3px !important; }
  .mode.au { padding-top: 4px !important; }
  .zero .mode { padding-top: 5px !important; }
  .zero .ind { padding-top: 2px !important; }
  .mode.box { border: 2px solid var(--bg) !important; border-bottom: 1px solid #dcdcdc !important; margin-right: 1px; padding: 0 0 0 1px !important; }
  .mode.box.au { padding-top: 3px !important; }
  .c { background: var(--bg); color: #fff; font-size: 13.500px; line-height: 18px; padding: 1px 0 0 2px; letter-spacing: -.27px; white-space: pre; }
  .c0 { padding-left: 32px; letter-spacing: -.35px; }
  .c1 { letter-spacing: -.2px; }
  .c4, .c5 { text-align: center; }
  .c4 { padding: 1px 0 0; letter-spacing: -.1px; }
  .c5 { padding: 1px 0 0; letter-spacing: -.42px; }
  .row > .c.edit { background: #fff; color: #000; border: 1px solid #000; font-size: 12px; text-align: left; padding: 0 0 0 2px; line-height: 19px; letter-spacing: -.2px; position: relative; margin: -2px 1px 0 -1px; height: 23px; }
  .sel { position: relative; }
  .row.sel > div { border-top: 2px solid #35703a; border-bottom: 0; }
  .row.sel > .idx { background: #cdebcd; color: #31752f; font-weight: 700; border-top: 1px solid #cdebcd; border-right: 2px solid #31752f; }
  .row.sel > .mode { background: #c4c4c4; }
  .row.sel > .c { color: #f0b8b8; padding-top: 0; }
  .row.sel > .c4, .row.sel > .c5 { padding-left: 0; }

  .hs { display: flex; height: 16px; background: #f1f1f1; margin: 0 2px; }
  .hs i { width: 15px; height: 15px; border: 1px solid #ababab; background: #fff; align-items: center; justify-content: center; }
  .hs u { height: 15px; border: 1px solid #ababab; background: #fff; }
  .hs .end { margin-left: auto; }
  .t1 { width: 515px; }
  .t2 { width: 547px; margin-left: 408px; }
  .chart { display: flex; width: 1141px; margin-left: 3px; border-left: 1px solid #ababab; }
  .plot { width: 1124px; border-top: 1px solid #ababab; display: flex; flex-direction: column; }
  .plot text { font-size: 11.500px; letter-spacing: -.2px; fill: #777; }
  .plot .res { fill: #000; font-weight: 700; font-size: 12px; letter-spacing: .13px; }
  .vsb { width: 16px; height: 578px; display: flex; flex-direction: column; margin: 1px 0 0 0; background: #f1f1f1; }
  .vsb i { width: 15px; height: 15px; border: 1px solid #ababab; background: #fff; align-items: center; justify-content: center; }
  .vsb u { width: 15px; height: 408px; border: 1px solid #ababab; background: #fff; }
  .vsb .bot { margin-top: auto; }

  .status { height: 22px; background: #31752f; color: #fff; display: flex; align-items: center; flex: none; padding-left: 7px; }
  .status .ready { width: 67px; }
  .status .nt { margin-left: 2px; letter-spacing: -.78px; word-spacing: .5px; }
  .views { display: flex; margin-left: auto; height: 22px; }
  .views i { width: 38px; align-items: center; justify-content: center; }
  .views .cur { background: #286325; }
  .status > .ic:last-child { margin: 0 8px 0 5px; }

  .taskbar { height: 40px; background: #000; color: #fff; display: flex; align-items: center; flex: none; }
  .start { width: 48px; display: flex; justify-content: center; }
  .search { width: 344px; height: 40px; line-height: 40px; background: #333; color: #a0a0a0; padding-left: 12px; font-size: 15px; letter-spacing: -.2px; }
  .apps { display: flex; height: 40px; }
  .apps i { width: 49.100px; height: 40px; align-items: center; justify-content: center; }
  .apps .chrome { border-bottom: 2px solid #d5eda8; border-top: 2px solid #000; width: 40px; margin: 0 4.500px; }
  .apps .msproject { background: #333; border-bottom: 2px solid #d5eda8; border-top: 2px solid #333; width: 48px; }
  .tray { display: flex; align-items: center; margin-left: auto; height: 40px; }
  .tray .ic:nth-child(2) { margin-left: 10px; }
  .tray .ic:nth-child(3) { margin-left: 11px; }
  .tray .ic:nth-child(4) { margin-left: 8px; }
  .tray .ic:nth-child(5) { margin-left: 8px; }
  .tray span { margin-left: 10px; width: 36px; }
  .clock { width: 60px; text-align: center; line-height: 17px; white-space: nowrap; padding-bottom: 2px; letter-spacing: -.5px; }
  .tray s { width: 1px; height: 40px; background: #666; margin: 0 4px 0 8px; }
</style>
